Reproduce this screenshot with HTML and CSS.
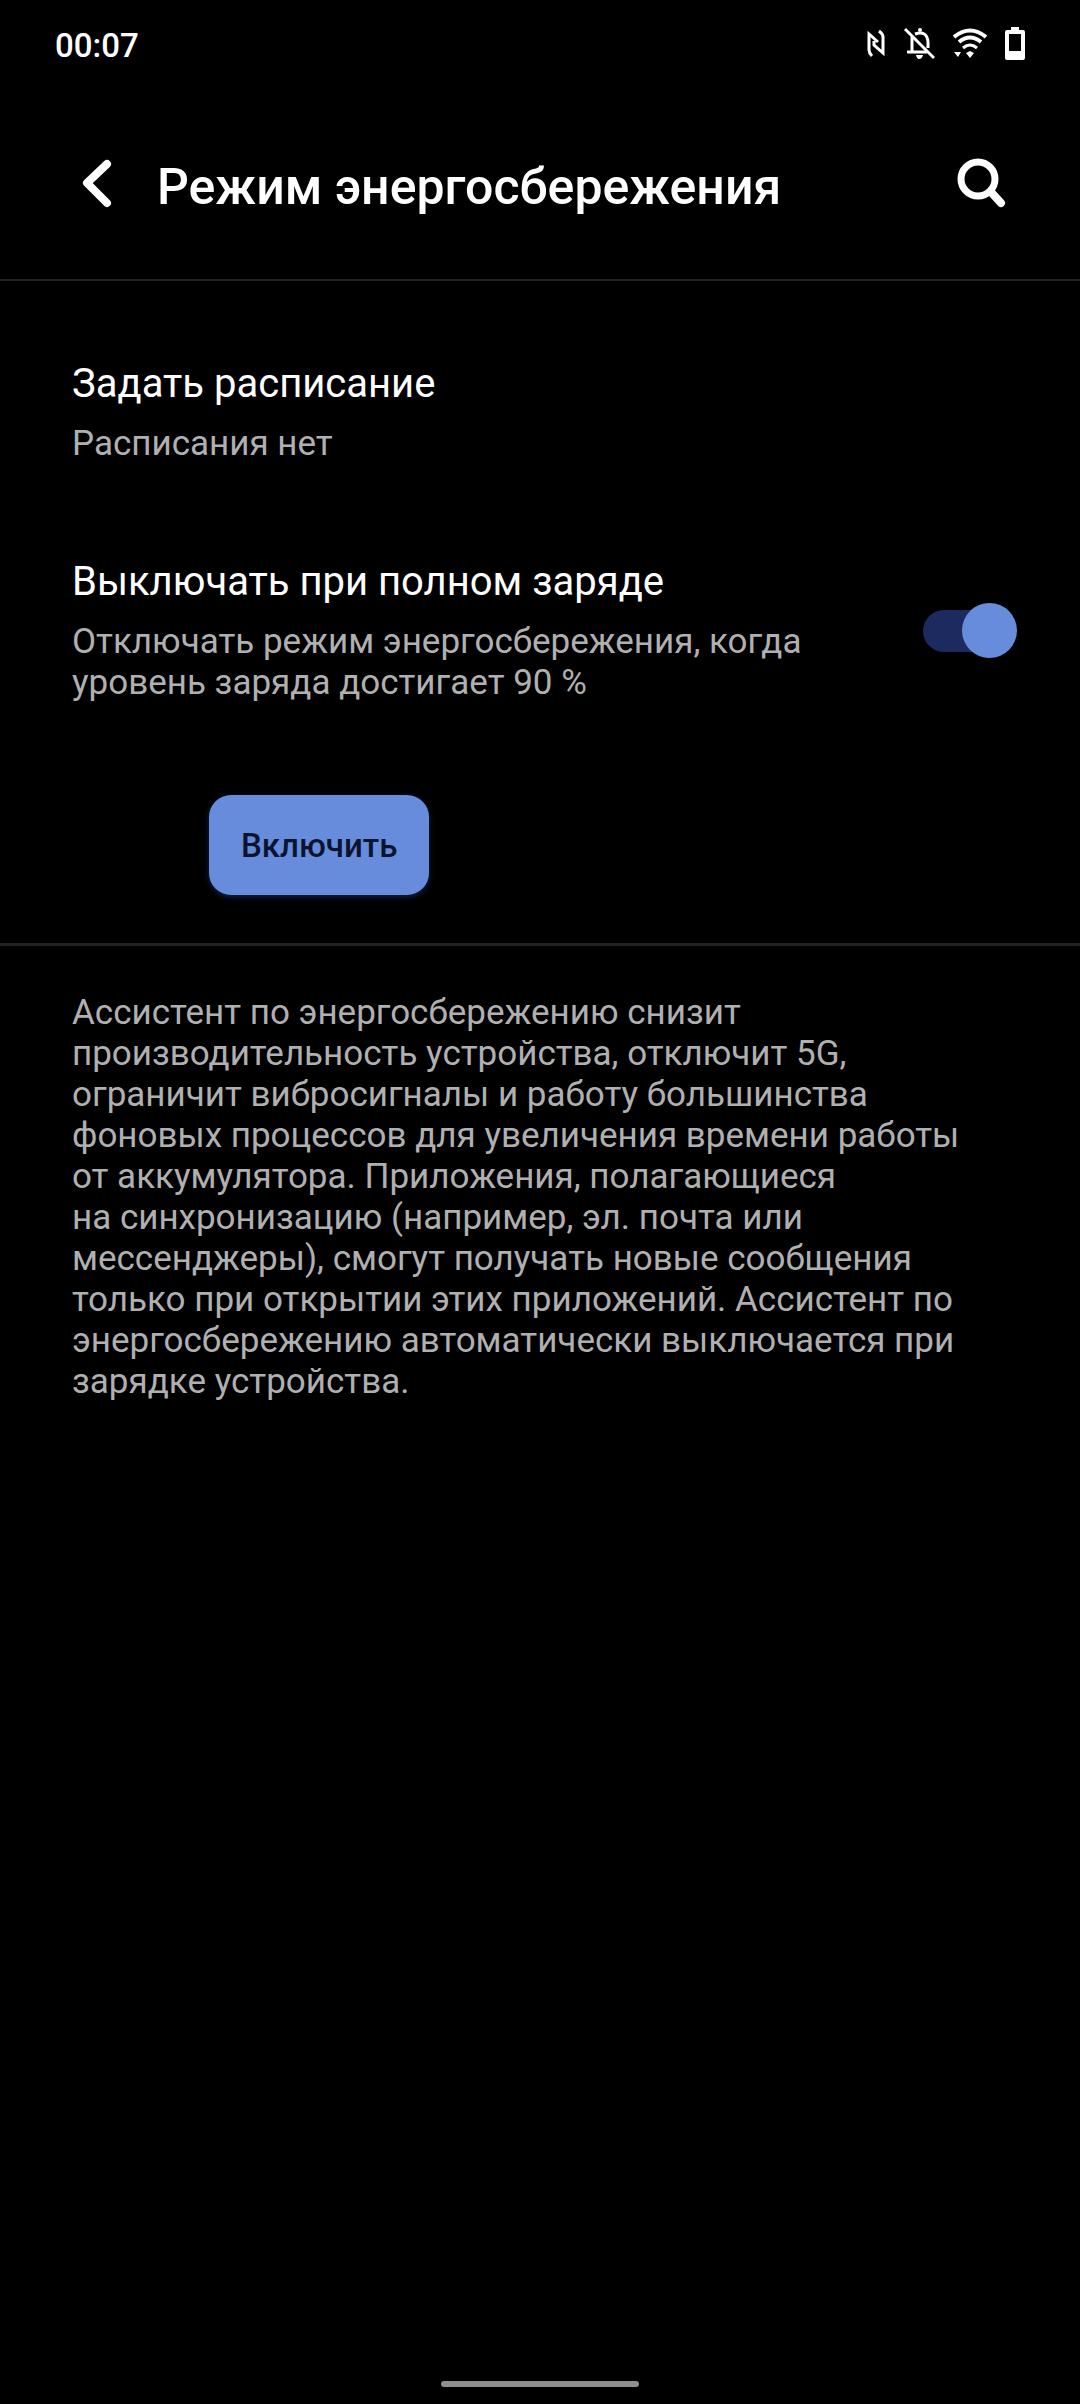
FILE: index.html
```html
<!DOCTYPE html>
<html lang="ru">
  <head>
    <meta charset="UTF-8" />
    <meta name="viewport" content="width=device-width, initial-scale=1" />
    <title>Режим энергосбережения</title>
    <link rel="stylesheet" href="styles.css">
  </head>
  <body>
    <div class="status-bar">
      <time class="clock">00:07</time>
      <div class="status-icons">
        <svg width="20" height="36" viewBox="0 0 20 36" aria-hidden="true">
          <path d="M7 31Q4 28 4 25V9L13 17" fill="none" stroke="#fff" stroke-width="3" />
          <path d="M14 6Q18 9 18 12V28L9 20V16" fill="none" stroke="#fff" stroke-width="3" />
        </svg>
        <svg width="32" height="36" viewBox="0 0 32 36" aria-hidden="true">
          <path d="M9 12V26M4 27H24M12 9Q24 5 25 17V23" fill="none" stroke="#fff" stroke-width="3" />
          <circle cx="17" cy="5" r="2" fill="#fff" />
          <path d="M13 30H20Q19 34 16 34Q14 34 13 30Z" fill="#fff" />
          <path d="M2 4L31 33" fill="none" stroke="#fff" stroke-width="3" />
        </svg>
        <svg width="34" height="36" viewBox="0 0 34 36" aria-hidden="true">
          <g fill="none" stroke="#fff" stroke-width="4">
            <path d="M1 12Q17 -1 33 12" />
            <path d="M6 17Q17 8 28 17" />
            <path d="M10 23Q17 17 24 23" stroke-width="3" />
          </g>
          <path d="M1 27H8L5 32ZM13 28L17 26L21 28L17 33Z" fill="#fff" />
        </svg>
        <svg width="20" height="36" viewBox="0 0 20 36" aria-hidden="true">
          <path d="M6 2H14V5H18Q20 5 20 7V33Q20 35 18 35H2Q0 35 0 33V7Q0 5 2 5H6ZM4 9V26H16V9Z" fill="#fff" fill-rule="evenodd" />
        </svg>
      </div>
    </div>

    <header class="header">
      <button class="icon-button" type="button" aria-label="Назад">
        <svg width="54" height="54" viewBox="0 0 54 54">
          <path d="M35 7L15 26L35 46" fill="none" stroke="#fff" stroke-width="8" stroke-linecap="round" stroke-linejoin="round" />
        </svg>
      </button>
      <h1>Режим энергосбережения</h1>
      <button class="icon-button" type="button" aria-label="Поиск">
        <svg width="54" height="54" viewBox="0 0 54 54">
          <circle cx="24" cy="22" r="17" fill="none" stroke="#fff" stroke-width="7" />
          <path d="M37 35L47 46" fill="none" stroke="#fff" stroke-width="8" stroke-linecap="round" />
        </svg>
      </button>
    </header>

    <main>
      <section class="settings">
        <a class="setting" href="#">
          <span class="setting-title">Задать расписание</span>
          <span class="setting-text">Расписания нет</span>
        </a>
        <div class="setting-row">
          <label class="setting" for="full-charge">
            <span class="setting-title">Выключать при полном заряде</span>
            <span class="setting-text">Отключать режим энергосбережения, когда уровень заряда достигает 90&nbsp;%</span>
          </label>
          <input class="switch" id="full-charge" type="checkbox" role="switch" checked>
        </div>
        <button class="enable-button" type="button">Включить</button>
      </section>
      <p class="description">Ассистент по энергосбережению снизит производительность устройства, отключит 5G, ограничит вибросигналы и работу большинства фоновых процессов для увеличения времени работы от&nbsp;аккумулятора. Приложения, полагающиеся на&nbsp;синхронизацию (например, эл. почта или мессенджеры), смогут получать новые сообщения только при открытии этих приложений. Ассистент по энергосбережению автоматически выключается при зарядке устройства.</p>
    </main>

    <div class="home-bar"></div>
  </body>
</html>
```
FILE: styles.css
```css
* {
  box-sizing: border-box;
}
body {
  background: #000;
  color: #fff;
  font-family: Roboto, sans-serif;
  display: flex;
  flex-direction: column;
  min-height: 100vh;
  margin: 0;
}
button {
  border: 0;
  font-family: inherit;
  cursor: pointer;
}
.status-bar {
  display: flex;
  justify-content: space-between;
  align-items: center;
  height: 90px;
  padding: 0 55px;
}
.clock {
  font-size: 33px;
  font-weight: 500;
}
.status-icons {
  display: flex;
  gap: 18px;
  margin-bottom: 4px;
}
.header {
  display: flex;
  align-items: center;
  height: 191px;
  padding: 0 72px 2px;
  border-bottom: 2px solid #222;
}
.header h1 {
  flex: 1;
  margin: 0 0 0 31px;
  padding-top: 6px;
  font-size: 50px;
  font-weight: 500;
  line-height: 60px;
}
.icon-button {
  width: 54px;
  height: 54px;
  padding: 0;
  background: none;
}
.icon-button svg {
  display: block;
}
main {
  flex: 1;
}
.settings {
  padding: 79px 63px 48px 72px;
  border-bottom: 3px solid #222;
}
.setting {
  display: flex;
  flex-direction: column;
  gap: 16px;
  color: #fff;
  text-decoration: none;
}
.setting-title {
  font-size: 40px;
  line-height: 47px;
}
.setting-text {
  color: #b0b0b0;
  font-size: 35px;
  line-height: 41px;
}
.setting-row {
  display: flex;
  justify-content: space-between;
  align-items: center;
  gap: 60px;
  margin: 94px 0 92px;
}
.switch {
  appearance: none;
  display: flex;
  align-items: center;
  flex: none;
  width: 94px;
  height: 56px;
  margin: 0;
  cursor: pointer;
}
.switch::before {
  content: "";
  width: 80px;
  height: 42px;
  border-radius: 21px;
  background: #1c2a60;
}
.switch::after {
  content: "";
  width: 55px;
  height: 55px;
  margin-left: -80px;
  border-radius: 50%;
  background: #678cdc;
}
.switch:checked::after {
  margin-left: -41px;
}
.enable-button {
  display: block;
  height: 100px;
  margin-left: 137px;
  padding: 0 32px;
  border-radius: 22px;
  background: #678cdc;
  box-shadow: 0 2px 6px #14234a;
  color: #0a1430;
  font-size: 33px;
  font-weight: 500;
}
.description {
  margin: 0;
  padding: 46px 100px 46px 72px;
  color: #b0b0b0;
  font-size: 35px;
  line-height: 41px;
}
.home-bar {
  align-self: center;
  width: 198px;
  height: 6px;
  margin-bottom: 17px;
  border-radius: 3px;
  background: #8e8e8e;
}
```
